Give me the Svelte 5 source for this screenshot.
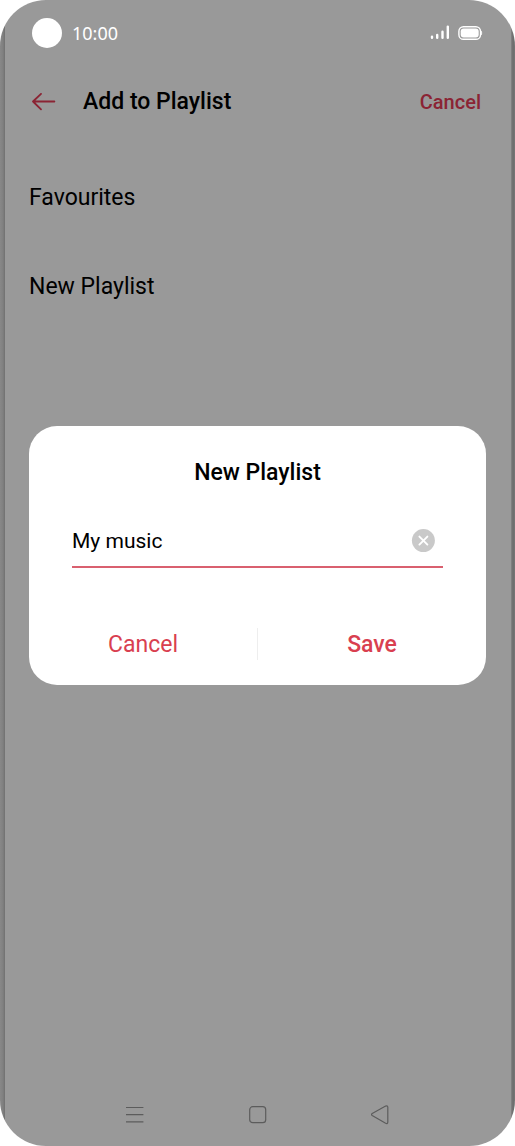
<script>
  const playlists = ['Favourites', 'New Playlist'];

  let name = $state('My music');
  let dialogOpen = $state(true);

  function closeDialog() {
    dialogOpen = false;
  }
</script>

<div class="phone">
  <div class="status">
    <span class="camera"></span>
    <span class="time">10:00</span>
    <svg class="signal" width="20" height="16" viewBox="0 0 20 16" fill="none" stroke="#fff" stroke-width="2.4" stroke-linecap="round">
      <path d="M2 11.6v1.2M7.2 10v2.8M12.5 6.8v6M17.8 1.6v11.2" />
    </svg>
    <svg class="battery" width="25" height="15" viewBox="0 0 25 15">
      <rect x="0.9" y="0.7" width="21.6" height="12.6" rx="4.6" fill="none" stroke="#fff" stroke-width="1.4" />
      <rect x="2.7" y="2.5" width="18" height="9" rx="3" fill="#fff" />
      <path d="M23.2 4.9q1.2 2.1 0 4.2z" fill="#fff" stroke="#fff" stroke-width="0.6" />
    </svg>
  </div>

  <header>
    <button class="back" aria-label="Back">
      <svg width="24" height="18" viewBox="0 0 24 18" fill="none" stroke="currentColor" stroke-width="1.8" stroke-linecap="round" stroke-linejoin="round">
        <path d="M22.4 8.5H1M9 .9L1 8.5l8 7.8" />
      </svg>
    </button>
    <h1>Add to Playlist</h1>
    <button class="cancel">Cancel</button>
  </header>

  <ul class="playlists">
    {#each playlists as playlist}
      <li><button>{playlist}</button></li>
    {/each}
  </ul>

  <nav>
    <button aria-label="Recent apps">
      <svg width="18" height="18" viewBox="0 0 18 18" stroke="currentColor" stroke-width="1.2">
        <path d="M0 1.5h17.4M0 8.6h17.4M0 15.8h17.4" />
      </svg>
    </button>
    <button aria-label="Home">
      <svg width="18" height="18" viewBox="0 0 18 18" fill="none" stroke="currentColor" stroke-width="1.2">
        <rect x="0.7" y="0.7" width="16" height="16" rx="3" />
      </svg>
    </button>
    <button aria-label="Back">
      <svg width="18" height="20" viewBox="0 0 18 20" fill="none" stroke="currentColor" stroke-width="1.2">
        <path d="M1.2 8.6L14.6 1.1Q16.8 .3 16.8 2.3v14.8q0 2-2.2 1.2L1.2 10.6q-1.3-1 0-2z" />
      </svg>
    </button>
  </nav>

  {#if dialogOpen}
    <div class="overlay">
      <div class="dialog" role="dialog" aria-labelledby="dialog-title">
        <h2 id="dialog-title">New Playlist</h2>
        <div class="field">
          <input type="text" aria-label="Playlist name" bind:value={name} />
          <button class="clear" aria-label="Clear" onclick={() => (name = '')}>
            <svg width="24" height="24" viewBox="0 0 24 24">
              <circle cx="12.4" cy="11.6" r="11.5" fill="#c9c9c9" />
              <path d="M8.4 7.6l8 8M16.4 7.6l-8 8" stroke="#fff" stroke-width="1.9" stroke-linecap="round" />
            </svg>
          </button>
        </div>
        <div class="actions">
          <button onclick={closeDialog}>Cancel</button>
          <span class="divider"></span>
          <button class="save" onclick={closeDialog}>Save</button>
        </div>
      </div>
    </div>
  {/if}
</div>

<style>
  :global(body) {
    background: #fff;
    font-family: Roboto, sans-serif;
  }

  .phone {
    position: relative;
    display: flex;
    flex-direction: column;
    box-sizing: border-box;
    min-height: 100vh;
    padding: 0 29px;
    border-radius: 46px;
    overflow: hidden;
    color: #000;
    background:
      linear-gradient(to right, #888, #808080 3px, #707070 5px) left / 5px 100% no-repeat,
      linear-gradient(to right, #858585, #6c6c6c 2px, #777 4px) right / 4px 100% no-repeat,
      #999;
  }

  button {
    padding: 0;
    border: 0;
    background: none;
    font: inherit;
    color: inherit;
    cursor: pointer;
  }

  svg {
    display: block;
  }

  .status {
    display: flex;
    align-items: center;
    height: 66px;
    padding: 0 3px;
    color: #fff;
  }

  .camera {
    width: 30px;
    height: 30px;
    border-radius: 50%;
    background: #fff;
  }

  .time {
    margin-left: 10px;
    font: 18px/26px 'Noto Sans', sans-serif;
  }

  .signal {
    margin-left: auto;
  }

  .battery {
    margin-left: 8px;
  }

  header {
    display: flex;
    align-items: center;
    height: 72px;
    padding: 0 5px 0 3px;
  }

  .back,
  .cancel {
    color: #8b2434;
  }

  h1,
  h2 {
    margin: 0;
    font-size: 23px;
    line-height: 28px;
    font-weight: 500;
  }

  h1 {
    margin-left: 27px;
  }

  .cancel {
    margin-left: auto;
    font-size: 20px;
    font-weight: 500;
  }

  .playlists {
    flex: 1;
    margin: 0;
    padding: 15px 0 0;
    list-style: none;
  }

  .playlists button {
    width: 100%;
    height: 89px;
    text-align: left;
    font-size: 23px;
  }

  nav {
    display: flex;
    align-items: center;
    justify-content: space-between;
    height: 62px;
    padding: 0 97px;
    color: #5c5c5c;
  }

  .overlay {
    position: absolute;
    inset: 0;
    display: flex;
    align-items: center;
    padding: 0 29px 35px;
  }

  .dialog {
    flex: 1;
    border-radius: 28px;
    background: #fff;
  }

  h2 {
    padding-top: 33px;
    text-align: center;
  }

  .field {
    display: flex;
    align-items: center;
    height: 50px;
    margin: 29px 43px 0;
    padding-right: 8px;
    border-bottom: 2px solid #d9606f;
  }

  input {
    flex: 1;
    min-width: 0;
    height: 100%;
    padding: 0;
    border: 0;
    outline: none;
    background: none;
    font: 21px/28px Roboto, sans-serif;
    color: #000;
  }

  .actions {
    display: flex;
    align-items: center;
    height: 82px;
    padding: 35px 0 0;
    color: #d93f50;
    font-size: 23px;
  }

  .actions button {
    flex: 1;
    height: 64px;
  }

  .actions .save {
    font-weight: 500;
  }

  .divider {
    width: 1px;
    height: 32px;
    background: #eee;
  }
</style>
